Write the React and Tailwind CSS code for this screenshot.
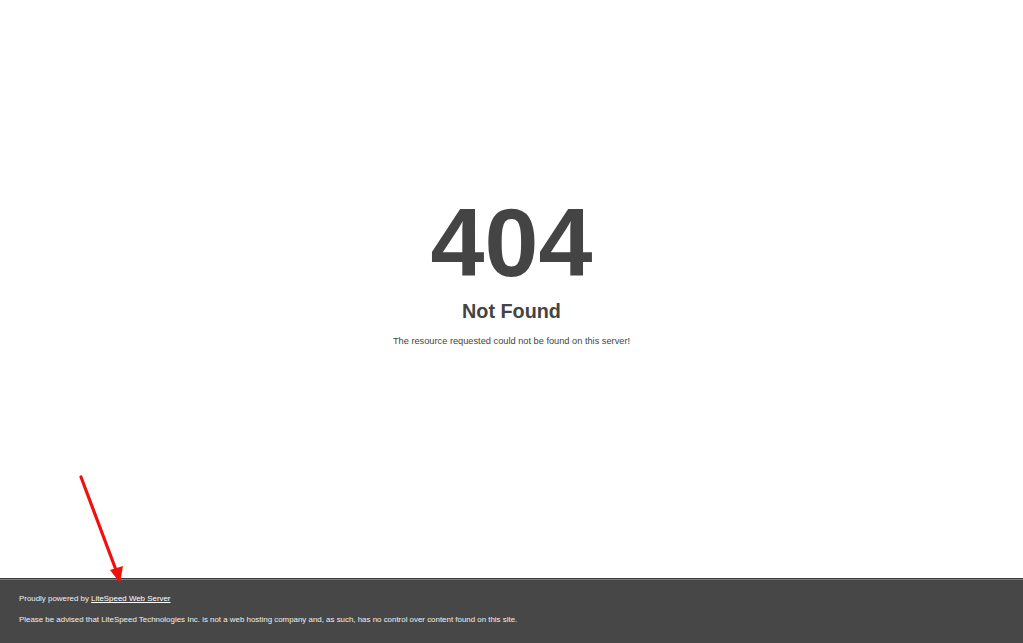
export default function App() {
  return (
    <div
      className="relative flex h-[643px] w-full flex-col bg-white text-[#444] text-[9.24px] leading-[13.2px]"
      style={{ fontFamily: '"Liberation Sans", Arial, Helvetica, sans-serif' }}
    >
      <div className="flex flex-1 flex-col items-center pt-[193px]">
        <div className="w-[528px] text-center">
          <h1 className="m-0 text-[97px] font-bold leading-[99px]">404</h1>
          <h2 className="mt-[13.2px] mb-[16.4px] text-[19.8px] font-bold leading-[13.2px]">
            Not Found
          </h2>
          <p>The resource requested could not be found on this server!</p>
        </div>
      </div>
      <div className="h-[65px] border-t border-t-[rgba(0,0,0,0.15)] bg-[#474747] px-[19px] text-[7.92px] leading-[13.2px] text-[#f0f0f0] shadow-[inset_0_1px_0_rgba(255,255,255,0.3)]">
        <div className="h-[13.2px]" />
        <div>
          Proudly powered by{" "}
          <a className="text-white underline" href="#">
            LiteSpeed Web Server
          </a>
        </div>
        <p className="mt-[7.92px]">
          Please be advised that LiteSpeed Technologies Inc. is not a web hosting company and, as such, has no control over content found on this site.
        </p>
      </div>
      <svg
        className="pointer-events-none absolute left-0 top-0"
        width="1023"
        height="643"
        viewBox="0 0 1023 643"
      >
        <line x1="81" y1="477" x2="116" y2="570" stroke="#f01010" strokeWidth="3.2" strokeLinecap="round" />
        <polygon points="120,583 110,570 123,566" fill="#f01010" />
      </svg>
    </div>
  );
}
